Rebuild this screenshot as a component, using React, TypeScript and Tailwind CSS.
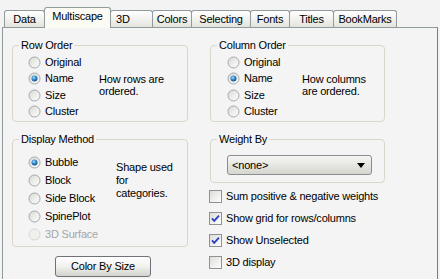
import React from "react";

const FONT = "font-['Liberation_Sans',Arial,sans-serif]";

function Radio({ checked = false, disabled = false }: { checked?: boolean; disabled?: boolean }) {
  return (
    <svg width="13" height="13" viewBox="0 0 13 13" className="shrink-0">
      <defs>
        <linearGradient id="rgrad" x1="0" y1="0" x2="1" y2="1">
          <stop offset="0" stopColor="#d9d9d2" />
          <stop offset="1" stopColor="#ffffff" />
        </linearGradient>
        <radialGradient id="rdot" cx="0.4" cy="0.35" r="0.65">
          <stop offset="0" stopColor="#9fdcff" />
          <stop offset="0.5" stopColor="#3a8fd0" />
          <stop offset="1" stopColor="#174f8c" />
        </radialGradient>
      </defs>
      <circle
        cx="6.5"
        cy="6.5"
        r="5.5"
        fill={disabled ? "#f0f0ec" : "url(#rgrad)"}
        stroke={disabled ? "#d6d6d0" : "#a3a7ad"}
      />
      {checked && <circle cx="6.5" cy="6.5" r="3" fill="url(#rdot)" />}
    </svg>
  );
}

function Check({ checked = false }: { checked?: boolean }) {
  return (
    <svg width="13" height="13" viewBox="0 0 13 13" className="shrink-0">
      <defs>
        <linearGradient id="cgrad" x1="0" y1="0" x2="1" y2="1">
          <stop offset="0" stopColor="#dcdcd6" />
          <stop offset="1" stopColor="#ffffff" />
        </linearGradient>
      </defs>
      <rect x="0.5" y="0.5" width="12" height="12" fill="url(#cgrad)" stroke="#8e9196" />
      {checked && (
        <path d="M3 6.3 L5.2 8.8 L10 3.6" stroke="#2b3fc4" strokeWidth="1.8" fill="none" />
      )}
    </svg>
  );
}

function Group({
  title,
  className = "",
  children,
}: {
  title: string;
  className?: string;
  children: React.ReactNode;
}) {
  return (
    <fieldset className={`border border-[#d9d7c8] rounded-[4px] ${className}`}>
      <legend className="ml-[6px] px-[2px] leading-[13px]">{title}</legend>
      {children}
    </fieldset>
  );
}

function RadioRow({
  label,
  checked,
  disabled,
  h,
}: {
  label: string;
  checked?: boolean;
  disabled?: boolean;
  h: string;
}) {
  return (
    <div className={`flex items-center gap-[4px] ${h} ${disabled ? "text-[#a6a6a6]" : ""}`}>
      <Radio checked={checked} disabled={disabled} />
      <span className="leading-[13px]">{label}</span>
    </div>
  );
}

function CheckRow({ label, checked }: { label: string; checked?: boolean }) {
  return (
    <div className="flex items-center gap-[4px] h-[22px] -ml-px">
      <Check checked={checked} />
      <span className="leading-[13px]">{label}</span>
    </div>
  );
}

type TabDef = { label: string; w: string; selected?: boolean; left?: boolean };

const tabs: TabDef[] = [
  { label: "Data", w: "w-[41px]" },
  { label: "Multiscape", w: "w-[67px]", selected: true },
  { label: "3D", w: "w-[43px]", left: true },
  { label: "Colors", w: "w-[40px]" },
  { label: "Selecting", w: "w-[60px]" },
  { label: "Fonts", w: "w-[40px]" },
  { label: "Titles", w: "w-[45px]" },
  { label: "BookMarks", w: "w-[64px]" },
];

export default function App() {
  return (
    <div
      className={`w-[440px] h-[279px] overflow-hidden bg-[#f3f3f3] text-[11px] tracking-[-0.2px] text-black ${FONT} flex flex-col`}
    >
      {/* Tab strip */}
      <div className="flex items-end h-[27px] pl-[4px] shrink-0 relative z-10">
        {tabs.map((t, i) =>
          t.selected ? (
            <div
              key={t.label}
              className={`${t.w} h-[21px] -mb-px ${i > 0 ? "-ml-px" : ""} relative z-10 flex items-center justify-center pb-[3px] border border-b-0 border-[#919b9c] rounded-t-[3px] bg-[#fbfbf4]`}
            >
              {t.label}
            </div>
          ) : (
            <div
              key={t.label}
              className={`${t.w} h-[17px] ${i > 0 ? "-ml-px" : ""} flex items-center ${t.left ? "justify-start pl-[5px]" : "justify-center"} border border-b-0 border-[#919b9c] rounded-t-[3px] bg-linear-to-b from-white to-[#e4e4de]`}
            >
              {t.label}
            </div>
          )
        )}
      </div>

      {/* Panel */}
      <div className="ml-[2px] w-[436px] flex-1 border-x border-t border-[#919b9c] border-r-[#7d7d7d] bg-[#f4f4f4] flex gap-[22px] pl-[9px] pt-[11px]">
        {/* Left column */}
        <div className="w-[176px] flex flex-col">
          <Group title="Row Order" className="pt-[2px] pb-[1px]">
            <div className="flex">
              <div className="w-[86px] pl-[15px] flex flex-col">
                <RadioRow label="Original" h="h-[16.5px]" />
                <RadioRow label="Name" checked h="h-[16.5px]" />
                <RadioRow label="Size" h="h-[16.5px]" />
                <RadioRow label="Cluster" h="h-[16.5px]" />
              </div>
              <div className="mt-[19px] leading-[12px]">
                How rows are
                <br />
                ordered.
              </div>
            </div>
          </Group>

          <Group title="Display Method" className="mt-[11px] pt-[7.5px] pb-[2px]">
            <div className="flex">
              <div className="w-[103px] pl-[15px] flex flex-col">
                <RadioRow label="Bubble" checked h="h-[18px]" />
                <RadioRow label="Block" h="h-[18px]" />
                <RadioRow label="Side Block" h="h-[18px]" />
                <RadioRow label="SpinePlot" h="h-[18px]" />
                <RadioRow label="3D Surface" disabled h="h-[18px]" />
              </div>
              <div className="mt-[7px] leading-[13.3px]">
                Shape used
                <br />
                for
                <br />
                categories.
              </div>
            </div>
          </Group>

          <div className="mt-[9px] ml-[43px]">
            <button className="w-[96px] h-[21px] rounded-[3px] border border-[#6f7378] bg-linear-to-b from-white via-[#f1f1ee] to-[#d3d3cd] flex items-center justify-center leading-[13px]">
              Color By Size
            </button>
          </div>
        </div>

        {/* Right column */}
        <div className="w-[175px] flex flex-col">
          <Group title="Column Order" className="pt-[2px] pb-[1px]">
            <div className="flex">
              <div className="w-[91px] pl-[16px] flex flex-col">
                <RadioRow label="Original" h="h-[16.5px]" />
                <RadioRow label="Name" checked h="h-[16.5px]" />
                <RadioRow label="Size" h="h-[16.5px]" />
                <RadioRow label="Cluster" h="h-[16.5px]" />
              </div>
              <div className="mt-[19px] leading-[12px]">
                How columns
                <br />
                are ordered.
              </div>
            </div>
          </Group>

          <Group title="Weight By" className="mt-[11px] pt-[9px] pb-[7px]">
            <div className="pl-[16px]">
              <div className="w-[145px] h-[20px] rounded-[3px] border border-[#8a8d92] bg-linear-to-b from-[#f6f6f4] to-[#d6d6d0] flex items-center justify-between pl-[4px] pr-[6px]">
                <span className="leading-[13px]">&lt;none&gt;</span>
                <svg width="8" height="5" viewBox="0 0 8 5">
                  <path d="M0 0 H8 L4 5 Z" fill="#000" />
                </svg>
              </div>
            </div>
          </Group>

          <div className="mt-[2px] flex flex-col">
            <CheckRow label="Sum positive & negative weights" />
            <CheckRow label="Show grid for rows/columns" checked />
            <CheckRow label="Show Unselected" checked />
            <CheckRow label="3D display" />
          </div>
        </div>
      </div>
    </div>
  );
}
